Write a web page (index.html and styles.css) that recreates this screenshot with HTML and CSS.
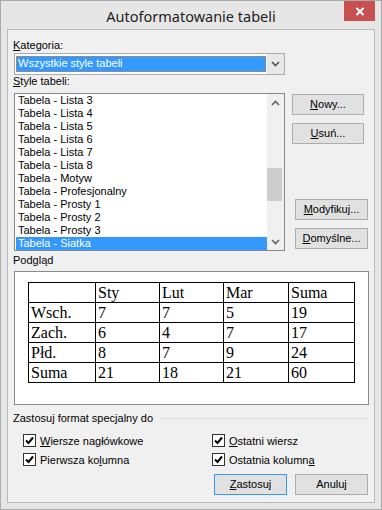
FILE: index.html
```html
<!DOCTYPE html>
<html lang="pl">

<head>
    <meta charset="UTF-8">
    <meta name="viewport" content="width=device-width, initial-scale=1.0">
    <title>Autoformatowanie tabeli</title>
    <link rel="stylesheet" href="styles.css">
</head>

<body>
    <div class="window">
        <div class="titlebar">
            <span class="title">Autoformatowanie tabeli</span>
            <div class="close-btn">
                <svg width="10" height="9" viewBox="0 0 10 9">
                    <path d="M1.5 1 L8.5 8 M8.5 1 L1.5 8" stroke="#fff" stroke-width="2" fill="none"/>
                </svg>
            </div>
        </div>

        <div class="client">
            <div class="label label-category"><u>K</u>ategoria:</div>
            <div class="select">
                <div class="select-value">Wszystkie style tabeli</div>
                <div class="select-btn">
                    <svg width="9" height="6" viewBox="0 0 9 6">
                        <path d="M1 1 L4.5 4.5 L8 1" stroke="#555" stroke-width="1.6" fill="none"/>
                    </svg>
                </div>
            </div>

            <div class="label label-style"><u>S</u>tyle tabeli:</div>
            <div class="styles-row">
                <div class="listbox">
                    <ul class="list-items">
                        <li>Tabela - Lista 3</li>
                        <li>Tabela - Lista 4</li>
                        <li>Tabela - Lista 5</li>
                        <li>Tabela - Lista 6</li>
                        <li>Tabela - Lista 7</li>
                        <li>Tabela - Lista 8</li>
                        <li>Tabela - Motyw</li>
                        <li>Tabela - Profesjonalny</li>
                        <li>Tabela - Prosty 1</li>
                        <li>Tabela - Prosty 2</li>
                        <li>Tabela - Prosty 3</li>
                        <li class="selected">Tabela - Siatka</li>
                    </ul>
                    <div class="scrollbar">
                        <div class="scroll-arrow">
                            <svg width="9" height="6" viewBox="0 0 9 6">
                                <path d="M1 5 L4.5 1.5 L8 5" stroke="#606060" stroke-width="1.6" fill="none"/>
                            </svg>
                        </div>
                        <div class="scroll-track">
                            <div class="scroll-thumb"></div>
                        </div>
                        <div class="scroll-arrow">
                            <svg width="9" height="6" viewBox="0 0 9 6">
                                <path d="M1 1 L4.5 4.5 L8 1" stroke="#606060" stroke-width="1.6" fill="none"/>
                            </svg>
                        </div>
                    </div>
                </div>

                <div class="side-buttons">
                    <div class="btn btn-new"><u>N</u>owy...</div>
                    <div class="btn btn-delete"><u>U</u>suń...</div>
                    <div class="btn btn-modify"><u>M</u>odyfikuj...</div>
                    <div class="btn btn-default"><u>D</u>omyślne...</div>
                </div>
            </div>

            <div class="label label-preview">Podgląd</div>
            <div class="preview">
                <table class="sample">
                    <colgroup>
                        <col class="c1">
                        <col class="c2">
                        <col class="c3">
                        <col class="c4">
                        <col class="c5">
                    </colgroup>
                    <tr><td></td><td>Sty</td><td>Lut</td><td>Mar</td><td>Suma</td></tr>
                    <tr><td>Wsch.</td><td>7</td><td>7</td><td>5</td><td>19</td></tr>
                    <tr><td>Zach.</td><td>6</td><td>4</td><td>7</td><td>17</td></tr>
                    <tr><td>Płd.</td><td>8</td><td>7</td><td>9</td><td>24</td></tr>
                    <tr><td>Suma</td><td>21</td><td>18</td><td>21</td><td>60</td></tr>
                </table>
            </div>

            <div class="group-title">
                <span>Zastosuj format specjalny do</span>
                <div class="group-line"></div>
            </div>

            <div class="checks">
                <label class="check"><span class="box"><svg width="11" height="11" viewBox="0 0 11 11"><path d="M2 5.5 L4.5 8 L9 2.5" stroke="#000" stroke-width="2" fill="none"/></svg></span><span><u>W</u>iersze nagłówkowe</span></label>
                <label class="check"><span class="box"><svg width="11" height="11" viewBox="0 0 11 11"><path d="M2 5.5 L4.5 8 L9 2.5" stroke="#000" stroke-width="2" fill="none"/></svg></span><span><u>O</u>statni wiersz</span></label>
                <label class="check"><span class="box"><svg width="11" height="11" viewBox="0 0 11 11"><path d="M2 5.5 L4.5 8 L9 2.5" stroke="#000" stroke-width="2" fill="none"/></svg></span><span>Pierwsza ko<u>l</u>umna</span></label>
                <label class="check"><span class="box"><svg width="11" height="11" viewBox="0 0 11 11"><path d="M2 5.5 L4.5 8 L9 2.5" stroke="#000" stroke-width="2" fill="none"/></svg></span><span>Ostatnia kolumn<u>a</u></span></label>
            </div>

            <div class="dialog-buttons">
                <div class="btn btn-primary"><u>Z</u>astosuj</div>
                <div class="btn">Anuluj</div>
            </div>
        </div>
    </div>
</body>

</html>
```

FILE: styles.css
```css
body {
    margin: 0;
    font-family: 'Liberation Sans', sans-serif;
    font-size: 11px;
    color: #000;
}

.window {
    width: 382px;
    height: 510px;
    box-sizing: border-box;
    border: 1px solid #ababab;
    background-color: #e6e6e6;
    padding: 0 6px 6px 6px;
    display: flex;
    flex-direction: column;
}

.titlebar {
    height: 28px;
    position: relative;
    display: flex;
    justify-content: center;
    align-items: center;
}

.title {
    font-family: 'Noto Sans', sans-serif;
    font-size: 14.5px;
    color: #1e1e1e;
    margin-top: 2px;
}

.close-btn {
    position: absolute;
    top: 0;
    right: 0;
    width: 31px;
    height: 20px;
    background-color: #c75050;
    display: flex;
    justify-content: center;
    align-items: center;
}

.client {
    flex: 1;
    border: 1px solid #b9b9b9;
    background-color: #f0f0f0;
    padding: 8px 6px 0 5px;
    display: flex;
    flex-direction: column;
}

.label {
    line-height: 15px;
}

.label-style {
    margin-top: -1px;
    margin-bottom: 4px;
}

.label-preview {
    margin-top: 2px;
    margin-bottom: 3px;
}

/* combo box */
.select {
    margin-left: 1px;
    width: 271px;
    height: 22px;
    box-sizing: border-box;
    border: 1px solid #acacac;
    background-color: #fff;
    display: flex;
}

.select-value {
    flex: 1;
    margin: 2px 0 2px 1px;
    padding-left: 2px;
    background-color: #3399ff;
    color: #fff;
    line-height: 15px;
    outline: 1px dotted #d9822b;
    outline-offset: -1px;
}

.select-btn {
    width: 17px;
    background-color: #e8e8e8;
    border-left: 1px solid #f4f4f4;
    display: flex;
    justify-content: center;
    align-items: center;
}

/* list of styles */
.styles-row {
    display: flex;
}

.listbox {
    margin-left: 1px;
    width: 271px;
    height: 158px;
    box-sizing: border-box;
    border: 1px solid #828790;
    background-color: #fff;
    display: flex;
}

.list-items {
    flex: 1;
    list-style: none;
    margin: 0;
    padding: 0 0 0 1px;
}

.list-items li {
    height: 13px;
    line-height: 13px;
    padding-left: 2px;
    white-space: nowrap;
}

.list-items li.selected {
    background-color: #3399ff;
    color: #fff;
}

.scrollbar {
    width: 17px;
    background-color: #f0f0f0;
    display: flex;
    flex-direction: column;
}

.scroll-arrow {
    height: 17px;
    display: flex;
    justify-content: center;
    align-items: center;
}

.scroll-track {
    flex: 1;
}

.scroll-thumb {
    margin-top: 57px;
    width: 15px;
    height: 33px;
    background-color: #cdcdcd;
}

/* buttons */
.btn {
    width: 73px;
    height: 21px;
    box-sizing: border-box;
    border: 1px solid #adadad;
    background-color: #e1e1e1;
    text-align: center;
    line-height: 18px;
}

.btn-primary {
    border-color: #3399ff;
}

.side-buttons {
    display: flex;
    flex-direction: column;
    margin-left: 7px;
}

.btn-new {
    width: 72px;
    margin-top: 1px;
}

.btn-delete {
    width: 72px;
    margin-top: 8px;
}

.btn-modify {
    margin-top: 55px;
    margin-left: 3px;
}

.btn-default {
    margin-top: 8px;
    margin-left: 3px;
}

/* preview */
.preview {
    margin-left: 1px;
    width: 355px;
    height: 134px;
    box-sizing: border-box;
    border: 1px solid #8a8a8a;
    background-color: #fff;
    padding-top: 10px;
}

.sample {
    margin: 0 auto;
    width: 327px;
    table-layout: fixed;
    border-collapse: collapse;
    font-family: 'Liberation Serif', serif;
    font-size: 16px;
}

.sample col.c1 { width: 67px; }
.sample col.c2 { width: 64px; }
.sample col.c3 { width: 64px; }
.sample col.c4 { width: 65px; }
.sample col.c5 { width: 66px; }

.sample td {
    border: 1px solid #000;
    height: 19px;
    padding: 0 2px;
    line-height: 19px;
    white-space: nowrap;
}

/* special format section */
.group-title {
    display: flex;
    align-items: center;
    margin-top: 6px;
    line-height: 15px;
}

.group-line {
    flex: 1;
    height: 1px;
    margin-left: 7px;
    background-color: #dcdcdc;
}

.checks {
    display: grid;
    grid-template-columns: 189px 1fr;
    padding-left: 10px;
    margin-top: 5px;
}

.check {
    display: flex;
    align-items: center;
    height: 19px;
}

.box {
    width: 13px;
    height: 13px;
    box-sizing: border-box;
    border: 1px solid #333;
    background-color: #fff;
    display: flex;
    margin-right: 4px;
}

.dialog-buttons {
    display: flex;
    justify-content: flex-end;
    gap: 8px;
    margin-top: 5px;
}
```
